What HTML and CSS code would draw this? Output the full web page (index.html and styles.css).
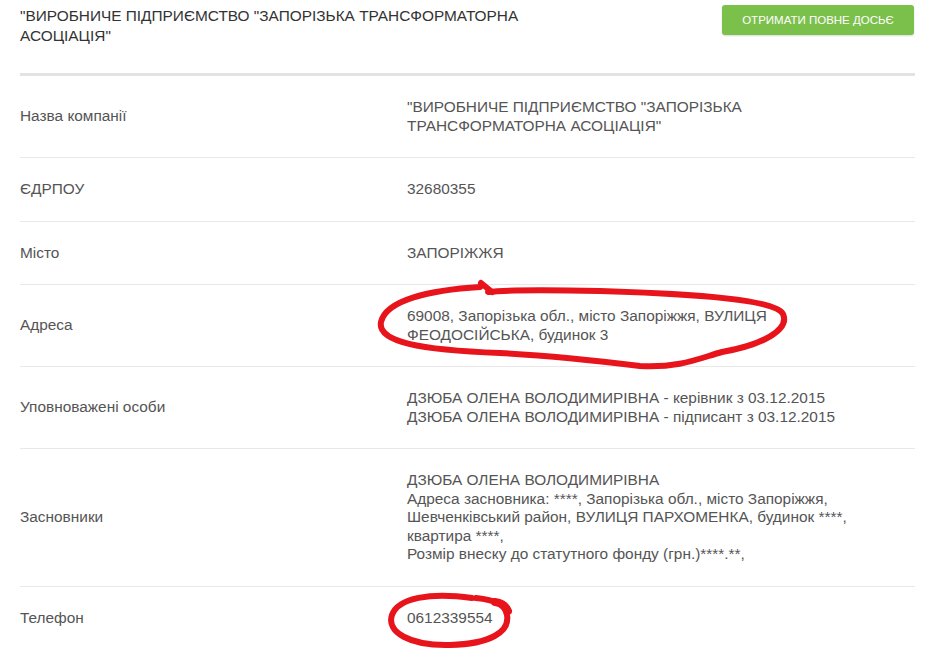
FILE: index.html
```html
<!DOCTYPE html>
<html lang="uk">
<head>
  <meta charset="UTF-8" />
  <title>ВИРОБНИЧЕ ПІДПРИЄМСТВО "ЗАПОРІЗЬКА ТРАНСФОРМАТОРНА АСОЦІАЦІЯ"</title>
  <link rel="stylesheet" href="styles.css">
</head>
<body>

  <div class="page">
    <div class="head">
      <h1 class="title">"ВИРОБНИЧЕ ПІДПРИЄМСТВО "ЗАПОРІЗЬКА ТРАНСФОРМАТОРНА АСОЦІАЦІЯ"</h1>
      <a href="#" class="dossier-btn">Отримати повне досьє</a>
    </div>

    <div class="info">
      <div class="row">
        <div class="label">Назва компанії</div>
        <div class="value">"ВИРОБНИЧЕ ПІДПРИЄМСТВО "ЗАПОРІЗЬКА<br>ТРАНСФОРМАТОРНА АСОЦІАЦІЯ"</div>
      </div>
      <div class="row">
        <div class="label">ЄДРПОУ</div>
        <div class="value">32680355</div>
      </div>
      <div class="row">
        <div class="label">Місто</div>
        <div class="value">ЗАПОРІЖЖЯ</div>
      </div>
      <div class="row">
        <div class="label">Адреса</div>
        <div class="value">69008, Запорізька обл., місто Запоріжжя, ВУЛИЦЯ<br>ФЕОДОСІЙСЬКА, будинок 3</div>
      </div>
      <div class="row">
        <div class="label">Уповноважені особи</div>
        <div class="value">ДЗЮБА ОЛЕНА ВОЛОДИМИРІВНА - керівник з 03.12.2015<br>ДЗЮБА ОЛЕНА ВОЛОДИМИРІВНА - підписант з 03.12.2015</div>
      </div>
      <div class="row">
        <div class="label">Засновники</div>
        <div class="value">ДЗЮБА ОЛЕНА ВОЛОДИМИРІВНА<br>Адреса засновника: ****, Запорізька обл., місто Запоріжжя,<br>Шевченківський район, ВУЛИЦЯ ПАРХОМЕНКА, будинок ****,<br>квартира ****,<br>Розмір внеску до статутного фонду (грн.)****.**,</div>
      </div>
      <div class="row">
        <div class="label">Телефон</div>
        <div class="value">0612339554</div>
      </div>
    </div>
  </div>

  <!-- червоні позначки поверх скріншоту -->
  <svg class="marks" width="930" height="649" viewBox="0 0 930 649">
    <path d="M480 287 C430 290 386 300 381 322 C377 342 420 350 500 353 C560 356 600 361 640 366 C680 368 700 358 722 352 C762 345 790 330 783 314 C776 300 700 294 600 291 C550 290 505 290 488 292" />
    <path d="M481 283 L492 292" />
    <path d="M472 598 C430 592 398 598 392 615 C386 632 410 646 450 645 C490 644 510 632 507 615 C505 604 495 600 476 598" />
    <path d="M495 602 C502 603 506 606 508 611" class="thick" />
  </svg>

</body>
</html>
```

FILE: styles.css
```css
body {
  margin: 0;
  background: #fff;
  font-family: 'Liberation Sans', Arial, sans-serif;
  color: #555;
}
.page {
  width: 895px;
  padding: 0 15px 0 20px;
}
.head {
  display: flex;
  justify-content: space-between;
  align-items: flex-start;
  padding-top: 5px;
  border-bottom: 3px solid #e3e3e3;
}
.title {
  margin: 1px 0 27px;
  width: 560px;
  font-size: 15.4px;
  font-weight: normal;
  line-height: 20px;
  color: #333;
}
.dossier-btn {
  display: flex;
  align-items: center;
  justify-content: center;
  width: 192px;
  height: 30px;
  margin-right: 1px;
  border-radius: 3px;
  background-color: #7cc04c;
  box-shadow: 0 1px 2px rgba(0,0,0,0.15);
  color: #fff;
  font-size: 11.5px;
  text-transform: uppercase;
  text-decoration: none;
}
.row {
  display: grid;
  grid-template-columns: 387px 1fr;
  align-items: center;
  padding: 22px 0;
  border-bottom: 1px solid #e8e8e8;
  font-size: 15.4px;
  line-height: 18.5px;
}
.label {
  color: #555;
}
.value {
  color: #555;
}
.marks {
  position: absolute;
  top: 0;
  left: 0;
  pointer-events: none;
}
.marks path {
  fill: none;
  stroke: #e8141c;
  stroke-width: 6;
  stroke-linecap: round;
  stroke-linejoin: round;
}
.marks .thick {
  stroke-width: 8;
}
```
